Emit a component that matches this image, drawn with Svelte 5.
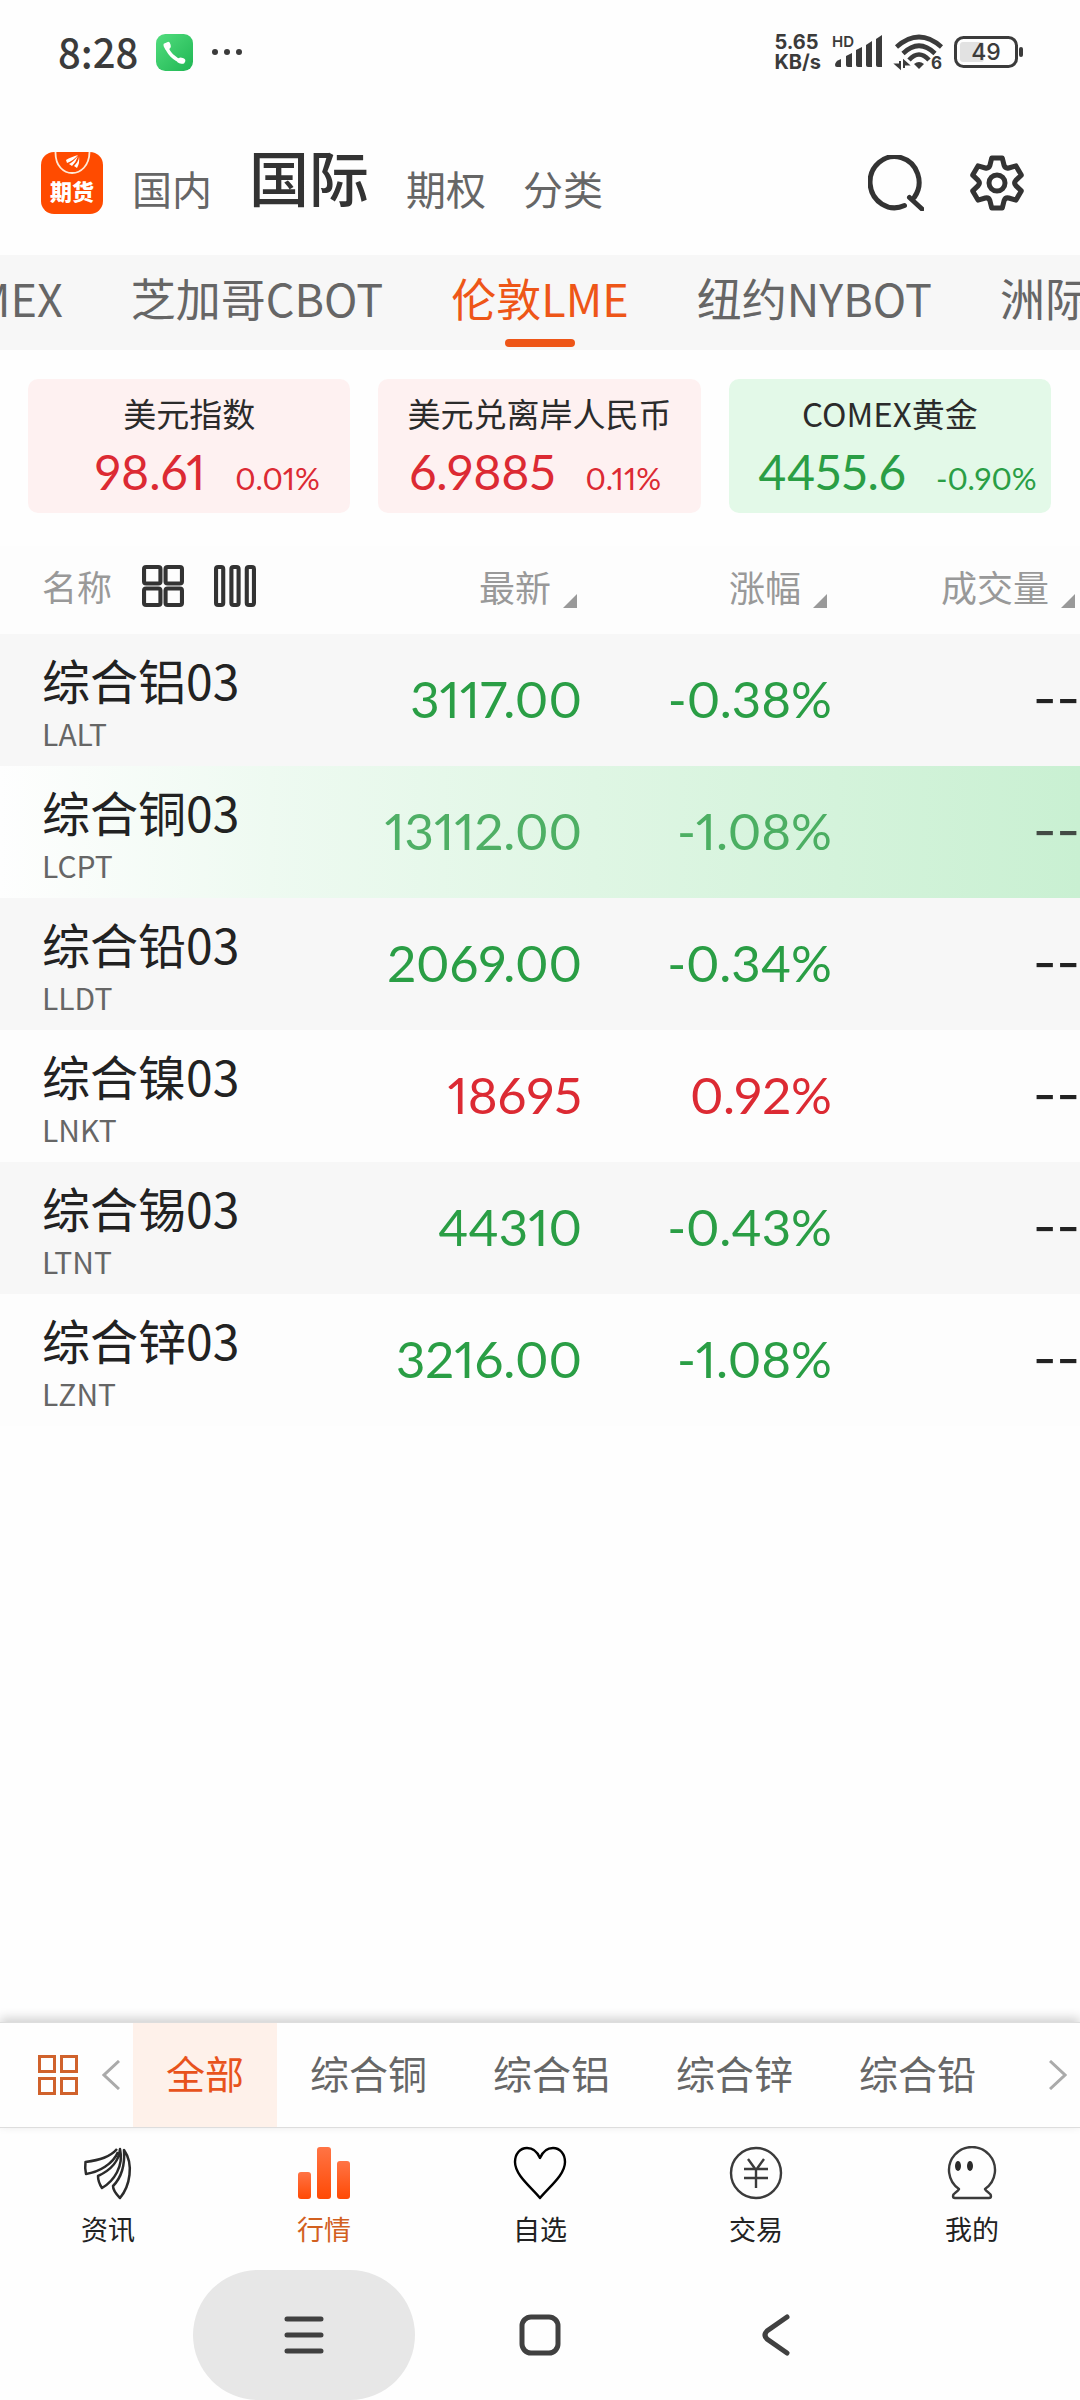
<script>
  const markets = ['国内', '国际', '期权', '分类'];
  let market = $state('国际');

  const before = ['纽约COMEX', '芝加哥CBOT'];
  const after = ['纽约NYBOT', '洲际ICE'];

  const indexes = [
    { name: '美元指数', value: '98.61', change: '0.01%', up: true },
    { name: '美元兑离岸人民币', value: '6.9885', change: '0.11%', up: true },
    { name: 'COMEX黄金', value: '4455.6', change: '-0.90%', up: false }
  ];

  const columns = ['最新', '涨幅', '成交量'];
  const quotes = [
    { name: '综合铝03', code: 'LALT', last: '3117.00', change: '-0.38%', up: false },
    { name: '综合铜03', code: 'LCPT', last: '13112.00', change: '-1.08%', up: false, flash: true },
    { name: '综合铅03', code: 'LLDT', last: '2069.00', change: '-0.34%', up: false },
    { name: '综合镍03', code: 'LNKT', last: '18695', change: '0.92%', up: true },
    { name: '综合锡03', code: 'LTNT', last: '44310', change: '-0.43%', up: false },
    { name: '综合锌03', code: 'LZNT', last: '3216.00', change: '-1.08%', up: false }
  ];

  const filters = ['全部', '综合铜', '综合铝', '综合锌', '综合铅'];
  let filter = $state('全部');

  const nav = [
    { id: 'news', label: '资讯' },
    { id: 'quotes', label: '行情' },
    { id: 'favorites', label: '自选' },
    { id: 'trade', label: '交易' },
    { id: 'me', label: '我的' }
  ];
  let page = $state('quotes');

  // Six-toothed gear outline centred in a 56 unit box.
  function gearPath() {
    const at = (deg, r) => {
      const a = (deg * Math.PI) / 180;
      return `${(28 + r * Math.sin(a)).toFixed(1)} ${(28 - r * Math.cos(a)).toFixed(1)}`;
    };
    let d = '';
    for (let t = 0; t < 360; t += 60) {
      d += `${t ? 'L' : 'M'}${at(t - 12, 25.5)}L${at(t + 12, 25.5)}L${at(t + 22, 19)}Q${at(t + 30, 16.5)} ${at(t + 38, 19)}`;
    }
    return d + 'Z';
  }
  const gear = gearPath();
</script>

<div class="app">
  <div class="status">
    <div class="status-side">
      <span class="time">8:28</span>
      <svg class="phone" viewBox="0 0 36 36" aria-hidden="true">
        <defs>
          <linearGradient id="call" x1="0" y1="0" x2="1" y2="1">
            <stop offset="0" stop-color="#52dd7e" />
            <stop offset="1" stop-color="#1fb653" />
          </linearGradient>
        </defs>
        <rect width="36" height="36" rx="9" fill="url(#call)" />
        <path d="M10 11C11 18 18 25 26 27" fill="none" stroke="#fff" stroke-width="3.4" />
        <path d="M7.500 9.500L12 7.500Q13.500 7.500 14.200 10.500Q15 13 13.500 14L9.800 16Q6.500 11.500 7.500 9.500Z" fill="#fff" />
        <path d="M28.500 26.500L27.500 28.500Q25 30 20.500 27.200L22 23.500Q23.500 22.500 26 23.300Q29 24 28.500 26.500Z" fill="#fff" />
      </svg>
      <svg class="dots" viewBox="0 0 32 8" aria-hidden="true">
        <circle cx="4" cy="4" r="3" /><circle cx="16" cy="4" r="3" /><circle cx="28" cy="4" r="3" />
      </svg>
    </div>
    <div class="status-side right">
      <span class="speed"><span>5.65</span><span>KB/s</span></span>
      <svg class="signal" viewBox="0 0 52 36" aria-hidden="true">
        <text x="0" y="13">HD</text>
        <path d="M3 31Q3 27 9 25V33H5Q3 33 3 31Z" />
        <path d="M14 22L20 19V33H16Q14 33 14 31Z" />
        <path d="M24 16L30 13V33H26Q24 33 24 31Z" />
        <path d="M34 11L40 7V33H36Q34 33 34 31Z" />
        <path d="M44 5L50 1V33H46Q44 33 44 31Z" />
      </svg>
      <svg class="wifi" viewBox="0 0 48 36" aria-hidden="true">
        <g fill="none" stroke="#3b3b3b" stroke-width="4.600">
          <path d="M1.500 13Q24-7 46.500 13" />
          <path d="M8 19.500Q24 4 40 19.500" />
          <path d="M14 26Q24 15 34 26" />
        </g>
        <path d="M19 30Q24 26 29 30L24 35Z" />
        <path d="M5 27V34L1 30.500H5M9 34V27L13 30.500H9" stroke="#3b3b3b" stroke-width="2" />
        <text x="36" y="35">6</text>
      </svg>
      <svg class="battery" viewBox="0 0 70 32" aria-hidden="true">
        <rect x="6" y="6" width="24" height="20" rx="3" fill="#e2e2e2" />
        <rect x="1.500" y="1.500" width="61" height="29" rx="8" fill="none" stroke="#3b3b3b" stroke-width="3" />
        <rect x="65" y="11" width="4" height="10" rx="2" />
        <text x="32" y="24" text-anchor="middle">49</text>
      </svg>
    </div>
  </div>

  <header class="top">
    <svg class="logo" viewBox="0 0 62 62" role="img" aria-label="期货">
      <rect width="62" height="62" rx="13" fill="#ff4b00" />
      <path d="M14.500 0C14 28 48 28 48.500 0" fill="none" stroke="#ffe9d6" stroke-width="1.800" />
      <path d="M37 3C33 4 28 6 25 8L26 11Q32 9 37 3ZM37 4C34 8 30 11 28 12L31 14Q35 10 37 4ZM38 4C38 9 35 12 33 14L36 16Q39 11 38 4Z" fill="#fff" />
      <text x="31" y="48" text-anchor="middle">期货</text>
    </svg>
    <nav class="markets" aria-label="市场">
      {#each markets as m}
        <button class:current={market === m} onclick={() => (market = m)}>{m}</button>
      {/each}
    </nav>
    <button class="tool" aria-label="搜索">
      <svg viewBox="0 0 56 56"><path d="M36.500 50.500A24.500 25.500 0 1 1 46.500 42M41.500 42.500L54 54" /></svg>
    </button>
    <button class="tool" aria-label="设置">
      <svg viewBox="0 0 56 56"><path d={gear} /><circle cx="28" cy="28" r="8" /></svg>
    </button>
  </header>

  <nav class="exchanges" aria-label="交易所">
    <div class="side left">{#each before as e}<button>{e}</button>{/each}</div>
    <button class="current">伦敦LME</button>
    <div class="side">{#each after as e}<button>{e}</button>{/each}</div>
  </nav>

  <section class="cards">
    {#each indexes as i}
      <button class="card" class:up={i.up}>
        <span class="card-name">{i.name}</span>
        <span class="card-line">
          <span class="card-value num">{i.value}</span>
          <span class="card-change num">{i.change}</span>
        </span>
      </button>
    {/each}
  </section>

  <main>
    <table>
      <colgroup><col /><col class="c-num" /><col class="c-num" /><col class="c-volume" /></colgroup>
      <thead>
        <tr>
          <th scope="col">
            <span class="name-head">
              名称
              <button aria-label="宫格">
                <svg viewBox="0 0 41 41"><rect x="2" y="2" width="16" height="16" rx="2" /><rect x="23" y="2" width="16" height="16" rx="2" /><rect x="2" y="23" width="16" height="16" rx="2" /><rect x="23" y="23" width="16" height="16" rx="2" /></svg>
              </button>
              <button aria-label="列表">
                <svg viewBox="0 0 41 41"><rect x="2" y="2" width="7" height="37" rx="2" /><rect x="17" y="2" width="7" height="37" rx="2" /><rect x="32" y="2" width="7" height="37" rx="2" /></svg>
              </button>
            </span>
          </th>
          {#each columns as c}
            <th scope="col">
              <button class="sort">{c}<svg viewBox="0 0 14 14"><path d="M14 0V14H0Z" /></svg></button>
            </th>
          {/each}
        </tr>
      </thead>
      <tbody>
        {#each quotes as q}
          <tr class:flash={q.flash}>
            <td class="instrument"><span class="name">{q.name}</span><span class="code">{q.code}</span></td>
            <td class="figure num" class:up={q.up}>{q.last}</td>
            <td class="figure num" class:up={q.up}>{q.change}</td>
            <td class="figure volume">--</td>
          </tr>
        {/each}
      </tbody>
    </table>
  </main>

  <div class="filters">
    <button class="all" aria-label="全部品种">
      <svg viewBox="0 0 40 40"><rect x="1.500" y="1.500" width="15" height="15" /><rect x="23.500" y="1.500" width="15" height="15" /><rect x="1.500" y="23.500" width="15" height="15" /><rect x="23.500" y="23.500" width="15" height="15" /></svg>
    </button>
    <button class="arrow" aria-label="向左"><svg viewBox="0 0 18 30"><path d="M17 1L2 15L17 29" /></svg></button>
    <div class="filter-list">
      {#each filters as f}
        <button class="filter" class:current={filter === f} onclick={() => (filter = f)}>{f}</button>
      {/each}
    </div>
    <button class="arrow" aria-label="向右"><svg viewBox="0 0 18 30"><path d="M1 1L16 15L1 29" /></svg></button>
  </div>

  <nav class="tabs" aria-label="主导航">
    {#each nav as n}
      <button class:current={page === n.id} onclick={() => (page = n.id)}>
        <svg viewBox="0 0 54 54" aria-hidden="true">
          {#if n.id === 'news'}
            <g stroke="#2b2b2b" stroke-width="2.500">
              <path d="M36 3C29 11 19 14 4.500 16C4 20 4 24 5 28C18 26 32 18 37 6" />
              <path d="M39 3C38 15 30 24 17 30C17 35 19 39 21 42C33 35 43 20 39 3Z" />
              <path d="M43 4C44 19 41 31 32 40C32 45 36 49 39 52C49 40 53 18 43 4Z" />
            </g>
          {:else if n.id === 'quotes'}
            <defs>
              <linearGradient id="bars" x1="0" y1="0" x2="0" y2="1">
                <stop offset="0" stop-color="#ff7445" />
                <stop offset="1" stop-color="#ff4a05" />
              </linearGradient>
            </defs>
            <rect x="1" y="26" width="13" height="27" rx="3" fill="url(#bars)" stroke="none" />
            <rect x="20" y="1" width="14" height="52" rx="3" fill="url(#bars)" stroke="none" />
            <rect x="40" y="15" width="13" height="38" rx="3" fill="url(#bars)" stroke="none" />
          {:else if n.id === 'favorites'}
            <path d="M27 12C24 5 19 2 14 2C7 2 2 8 2 16C2 29 18 41 27 52C36 41 52 29 52 16C52 8 47 2 40 2C35 2 30 5 27 12Z" stroke="#000" stroke-width="2.400" />
          {:else if n.id === 'trade'}
            <g stroke="#3b3b3b" stroke-width="2.400">
              <circle cx="27" cy="27" r="25" />
              <path d="M19 13L27 24L35 13M15 23H39M15 32H39M27 24V42" />
            </g>
          {:else}
            <path d="M14 43A23 23 0 1 1 40 43C41 46 46 47 46 50Q46 52 44 52H10Q8 52 8 50C8 47 13 46 14 43Z" stroke="#3b3b3b" stroke-width="2.400" />
            <ellipse cx="13" cy="20" rx="3" ry="5" fill="#2b2b2b" stroke="none" />
            <ellipse cx="25" cy="20" rx="3" ry="5" fill="#2b2b2b" stroke="none" />
          {/if}
        </svg>
        {n.label}
      </button>
    {/each}
  </nav>

  <div class="system">
    <button class="pressed" aria-label="最近任务"><svg viewBox="0 0 42 42"><path d="M4 5H38M4 21H38M4 37H38" /></svg></button>
    <button aria-label="主屏幕"><svg viewBox="0 0 42 42"><rect x="3" y="3" width="36" height="36" rx="9" /></svg></button>
    <button aria-label="返回"><svg viewBox="0 0 42 42"><path d="M32 3L12 17Q8 21 12 25L32 39" /></svg></button>
  </div>
</div>

<style>
  :global(body) {
    margin: 0;
    background: #fff;
  }
  .app {
    display: flex;
    flex-direction: column;
    min-height: 100vh;
    overflow: hidden;
    background: #fefefe;
    color: #222;
    font-family: 'Noto Sans CJK SC', 'Noto Sans', sans-serif;
  }
  button {
    flex: none;
    padding: 0;
    border: 0;
    background: none;
    color: inherit;
    font: inherit;
    white-space: nowrap;
    cursor: pointer;
  }
  svg {
    display: block;
  }
  .num {
    font-family: Lato, 'Noto Sans CJK SC', sans-serif;
    font-variant-numeric: proportional-nums;
  }

  .status {
    display: flex;
    justify-content: space-between;
    align-items: center;
    height: 104px;
    padding: 0 56px 0 58px;
    color: #3b3b3b;
    fill: #3b3b3b;
  }
  .status-side {
    display: flex;
    align-items: center;
    gap: 18px;
  }
  .status-side.right {
    gap: 11px;
    font-family: Inter, 'Noto Sans', sans-serif;
  }
  .time {
    padding-bottom: 2px;
    font-size: 40px;
    font-weight: 500;
    line-height: 48px;
  }
  .phone {
    width: 37px;
    height: 37px;
  }
  .dots {
    width: 32px;
    height: 8px;
  }
  .speed {
    display: flex;
    flex-direction: column;
    font-size: 20px;
    font-weight: 700;
    line-height: 20px;
  }
  .signal {
    width: 52px;
    height: 36px;
    overflow: visible;
    font-size: 15px;
    font-weight: 600;
  }
  .wifi {
    width: 48px;
    height: 36px;
    overflow: visible;
    font-size: 17px;
    font-weight: 700;
  }
  .battery {
    width: 70px;
    height: 32px;
    font-size: 23px;
    font-weight: 500;
  }

  .top {
    display: flex;
    align-items: center;
    gap: 45px;
    height: 151px;
    padding: 6px 55px 0 41px;
    box-sizing: border-box;
  }
  .logo {
    flex: none;
    width: 62px;
    height: 62px;
    margin-right: -16px;
    fill: #fff;
    font-size: 22px;
    font-weight: 900;
  }
  .markets {
    display: flex;
    flex: 1;
    align-items: flex-end;
    gap: 37px;
    padding-bottom: 14px;
    color: #666;
    font-size: 40px;
    line-height: 54px;
  }
  .markets .current {
    color: #333;
    font-size: 60px;
    font-weight: 500;
    line-height: 78px;
  }
  .tool svg {
    width: 56px;
    height: 56px;
    fill: none;
    stroke: #333;
    stroke-width: 5;
    stroke-linecap: round;
    stroke-linejoin: round;
  }

  .exchanges {
    display: grid;
    grid-template-columns: minmax(0, 1fr) auto minmax(0, 1fr);
    gap: 68px;
    height: 95px;
    padding-top: 2px;
    box-sizing: border-box;
    overflow: hidden;
    background: #f7f7f7;
    color: #666;
    font-size: 45px;
    line-height: 82px;
  }
  .side {
    display: flex;
    align-items: flex-start;
    gap: 68px;
  }
  .side.left {
    justify-content: flex-end;
  }
  .exchanges > .current {
    display: flex;
    flex-direction: column;
    align-items: center;
    color: #ee5618;
  }
  .exchanges > .current::after {
    content: '';
    width: 70px;
    height: 8px;
    border-radius: 4px;
    background: #ee5618;
  }

  .cards {
    display: grid;
    grid-template-columns: repeat(3, minmax(0, 1fr));
    gap: 28px;
    padding: 29px 29px 33px 28px;
  }
  .card {
    display: flex;
    flex-direction: column;
    height: 134px;
    padding-top: 9px;
    border-radius: 10px;
    background: #e3f9e8;
    color: #2a9e45;
  }
  .card.up {
    background: #fef1f1;
    color: #dc2a33;
  }
  .card-name {
    color: #2b2b2b;
    font-size: 33px;
    line-height: 50px;
    text-align: center;
  }
  .card-line {
    display: grid;
    grid-template-columns: 55% 1fr;
    align-items: baseline;
    gap: 30px;
    line-height: 68px;
    text-align: left;
  }
  .card-value {
    font-size: 48px;
    text-align: right;
  }
  .card-change {
    font-size: 31px;
  }

  main {
    flex: 1;
  }
  table {
    width: 100%;
    border-collapse: collapse;
    table-layout: fixed;
  }
  .c-num {
    width: 250px;
  }
  .c-volume {
    width: 248px;
  }
  th,
  td {
    padding: 0;
  }
  th {
    height: 80px;
    padding-bottom: 8px;
    background: #fdfdfd;
    color: #999;
    font-size: 36px;
    font-weight: 400;
    line-height: 52px;
  }
  .name-head {
    display: flex;
    align-items: center;
    gap: 30px;
    padding-left: 42px;
    font-size: 35px;
  }
  .name-head svg {
    width: 42px;
    height: 42px;
    fill: none;
    stroke: #333;
    stroke-width: 4;
  }
  .sort {
    display: flex;
    align-items: flex-end;
    justify-content: flex-end;
    gap: 12px;
    width: 100%;
    padding-right: 5px;
    box-sizing: border-box;
  }
  .sort svg {
    width: 14px;
    height: 14px;
    padding-bottom: 4px;
    fill: #999;
  }
  tbody tr {
    height: 132px;
    background: #fdfdfd;
  }
  tbody tr:nth-child(odd) {
    background: #f7f7f7;
  }
  tbody tr.flash {
    background: linear-gradient(90deg, #fefefe, #eefaf1 25%, #dff6e4 55%, #c9f0d2);
  }
  .instrument span {
    display: block;
    padding-left: 42px;
    white-space: nowrap;
  }
  .name {
    font-size: 48px;
    line-height: 66px;
  }
  .code {
    color: #666;
    font-size: 30px;
    line-height: 42px;
  }
  .figure {
    padding-bottom: 4px;
    color: #2a9e45;
    font-size: 51px;
    text-align: right;
  }
  .figure.up {
    color: #dc2a33;
  }
  .figure.volume {
    color: #222;
    font-family: Inter, sans-serif;
  }
  .flash .figure {
    opacity: 0.8;
  }

  .filters {
    display: flex;
    align-items: stretch;
    height: 104px;
    border-top: 1px solid #ddd;
    border-bottom: 1px solid #ddd;
    box-shadow: 0 -4px 10px rgb(0 0 0 / 18%);
    color: #666;
    font-size: 39px;
  }
  .all {
    padding: 0 24px 0 38px;
  }
  .all svg {
    width: 40px;
    height: 40px;
    fill: none;
    stroke: #d0622c;
    stroke-width: 3;
  }
  .arrow {
    padding: 0 13px 0 0;
  }
  .arrow svg {
    width: 18px;
    height: 30px;
    fill: none;
    stroke: #aaa;
    stroke-width: 3;
  }
  .filter-list {
    display: flex;
    flex: 1;
    overflow: hidden;
  }
  .filter {
    padding: 0 33px 6px;
  }
  .filter.current {
    background: #fef1ea;
    color: #e8531c;
  }

  .tabs {
    display: grid;
    grid-template-columns: repeat(5, 1fr);
    height: 142px;
    color: #222;
    font-size: 27px;
    line-height: 40px;
  }
  .tabs button {
    display: flex;
    flex-direction: column;
    align-items: center;
    gap: 9px;
    padding-top: 18px;
  }
  .tabs .current {
    color: #d2601f;
  }
  .tabs svg {
    width: 54px;
    height: 54px;
    fill: none;
    stroke-linejoin: round;
  }

  .system {
    display: flex;
    justify-content: center;
    gap: 14px;
    height: 130px;
  }
  .system button {
    display: grid;
    place-items: center;
    width: 222px;
    border-radius: 65px;
  }
  .system .pressed {
    background: #e7e7e7;
  }
  .system svg {
    width: 42px;
    height: 42px;
    fill: none;
    stroke: #404040;
    stroke-width: 5;
    stroke-linecap: round;
  }
</style>
